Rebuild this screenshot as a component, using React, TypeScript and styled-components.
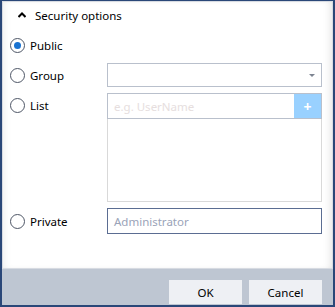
import React from "react";
import styled, { createGlobalStyle } from "styled-components";

const Global = createGlobalStyle`
  html, body { margin: 0; padding: 0; background: #fff; }
  body { font-family: "Segoe UI", "Noto Sans", "Open Sans", sans-serif; }
  * { box-sizing: border-box; }
`;

const Window = styled.div`
  width: 335px;
  height: 307px;
  border: 2px solid #2a4778;
  border-top-width: 1px;
  display: flex;
  flex-direction: column;
  background: #fff;
`;

const Body = styled.div`
  flex: 1;
  background: #fff;
  box-shadow: inset 0 0 0 1px #d7dbe2, inset -6px 0 8px -4px rgba(0,0,0,0.12), inset 6px 0 8px -4px rgba(0,0,0,0.08);
  display: flex;
  flex-direction: column;
  padding: 5px 11px 0 8px;
`;

const Header = styled.div`
  display: flex;
  align-items: center;
  height: 18px;
  gap: 9px;
  padding-left: 8px;
  font-size: 11.5px;
  color: #000;
`;

const Form = styled.div`
  display: grid;
  grid-template-columns: 97px 1fr;
  grid-auto-rows: minmax(24px, auto);
  row-gap: 6px;
  margin-top: 9px;
`;

const RadioLabel = styled.label<{ $top?: boolean }>`
  display: flex;
  align-items: center;
  gap: 5px;
  height: ${(p) => (p.$top ? 25 : 24)}px;
  align-self: ${(p) => (p.$top ? "start" : "center")};
  font-size: 11.5px;
  color: #000;
`;

const Circle = styled.span<{ $checked?: boolean }>`
  width: 15px;
  height: 15px;
  border-radius: 50%;
  border: 1px solid #4e5666;
  background: #fff;
  display: flex;
  align-items: center;
  justify-content: center;
  &::after {
    content: "";
    width: 7px;
    height: 7px;
    border-radius: 50%;
    background: ${(p) => (p.$checked ? "#1a73d1" : "transparent")};
  }
`;

const Combo = styled.div`
  height: 24px;
  border: 1px solid #b9c0cc;
  display: flex;
  align-items: center;
  justify-content: flex-end;
  padding-right: 6px;
`;

const Caret = styled.span`
  width: 0;
  height: 0;
  border-left: 3px solid transparent;
  border-right: 3px solid transparent;
  border-top: 3px solid #7d8491;
`;

const ListBlock = styled.div`
  display: flex;
  flex-direction: column;
`;

const InputRow = styled.div`
  height: 26px;
  border: 1px solid #b9c0cc;
  display: flex;
`;

const TextInput = styled.div<{ $dark?: boolean }>`
  flex: 1;
  display: flex;
  align-items: center;
  padding-left: 6px;
  font-size: 11.5px;
  color: ${(p) => (p.$dark ? "#9aa3b8" : "#e6dede")};
`;

const AddButton = styled.div`
  width: 27px;
  background: #99d1ff;
  color: #fff;
  display: flex;
  align-items: center;
  justify-content: center;
  font-size: 14px;
  font-weight: bold;
`;

const ListBox = styled.div`
  height: 83px;
  border: 1px solid #d9d9d9;
  border-top: none;
`;

const PrivateInput = styled.div`
  height: 26px;
  border: 1px solid #5b6d92;
  display: flex;
`;

const Footer = styled.div`
  height: 36px;
  background: #bec6d2;
  display: flex;
  justify-content: flex-end;
  align-items: flex-start;
  gap: 7px;
  padding: 11px 11px 0 0;
`;

const Button = styled.button`
  width: 73px;
  height: 24px;
  border: none;
  background: #eef0f4;
  font-family: inherit;
  font-size: 11.5px;
  color: #000;
  padding: 0;
`;

export default function App() {
  return (
    <>
      <Global />
      <Window>
        <Body>
          <Header>
            <svg width="8" height="6" viewBox="0 0 8 6">
              <path d="M0.5 5 L4 1.5 L7.5 5" stroke="#000" strokeWidth="2" fill="none" />
            </svg>
            <span>Security options</span>
          </Header>
          <Form>
            <RadioLabel>
              <Circle $checked />
              Public
            </RadioLabel>
            <div />
            <RadioLabel>
              <Circle />
              Group
            </RadioLabel>
            <Combo>
              <Caret />
            </Combo>
            <RadioLabel $top>
              <Circle />
              List
            </RadioLabel>
            <ListBlock>
              <InputRow>
                <TextInput>e.g. UserName</TextInput>
                <AddButton>+</AddButton>
              </InputRow>
              <ListBox />
            </ListBlock>
            <RadioLabel>
              <Circle />
              Private
            </RadioLabel>
            <PrivateInput>
              <TextInput $dark>Administrator</TextInput>
            </PrivateInput>
          </Form>
        </Body>
        <Footer>
          <Button>OK</Button>
          <Button>Cancel</Button>
        </Footer>
      </Window>
    </>
  );
}
